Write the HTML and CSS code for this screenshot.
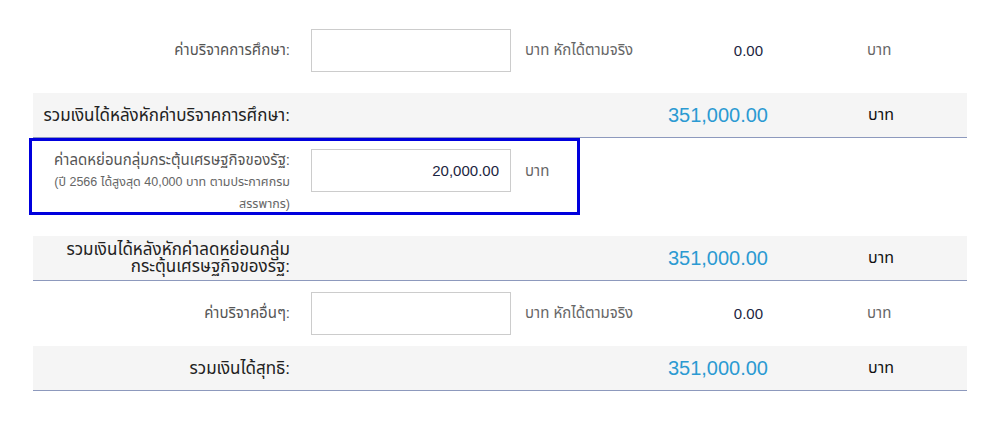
FILE: index.html
```html
<!DOCTYPE html>
<html lang="th">
<head>
  <meta charset="utf-8">
  <title>คำนวณเงินได้สุทธิ</title>
  <link rel="stylesheet" href="styles.css">
</head>
<body>
  <div class="form">

    <div class="row input-row">
      <div class="label">ค่าบริจาคการศึกษา:</div>
      <input type="text" class="amount-input" aria-label="ค่าบริจาคการศึกษา">
      <div class="unit">บาท หักได้ตามจริง</div>
      <div class="amount">0.00</div>
      <div class="currency">บาท</div>
    </div>

    <div class="row total-row first-total">
      <div class="label one-line">รวมเงินได้หลังหักค่าบริจาคการศึกษา:</div>
      <div></div>
      <div></div>
      <div class="total">351,000.00</div>
      <div class="currency">บาท</div>
    </div>

    <div class="row input-row note-row">
      <div class="highlight"></div>
      <div class="label">
        <div class="main-label">ค่าลดหย่อนกลุ่มกระตุ้นเศรษฐกิจของรัฐ:</div>
        <div class="note">(ปี 2566 ได้สูงสุด 40,000 บาท ตามประกาศกรม<br>สรรพากร)</div>
      </div>
      <input type="text" class="amount-input" value="20,000.00" aria-label="ค่าลดหย่อนกลุ่มกระตุ้นเศรษฐกิจของรัฐ">
      <div class="unit">บาท</div>
    </div>

    <div class="row total-row">
      <div class="label">รวมเงินได้หลังหักค่าลดหย่อนกลุ่ม<br>กระตุ้นเศรษฐกิจของรัฐ:</div>
      <div></div>
      <div></div>
      <div class="total">351,000.00</div>
      <div class="currency">บาท</div>
    </div>

    <div class="row input-row">
      <div class="label">ค่าบริจาคอื่นๆ:</div>
      <input type="text" class="amount-input" aria-label="ค่าบริจาคอื่นๆ">
      <div class="unit">บาท หักได้ตามจริง</div>
      <div class="amount">0.00</div>
      <div class="currency">บาท</div>
    </div>

    <div class="row total-row">
      <div class="label">รวมเงินได้สุทธิ:</div>
      <div></div>
      <div></div>
      <div class="total">351,000.00</div>
      <div class="currency">บาท</div>
    </div>

  </div>
</body>
</html>
```

FILE: styles.css
```css
body {
  margin: 0;
  background-color: white;
  font-family: "Liberation Sans", "Noto Sans Thai", Arial, sans-serif;
  font-size: 15px;
  color: #555;
}
.form {
  width: 934px;
  margin: 18px 0 0 33px;
}
.row {
  display: grid;
  grid-template-columns: 278px 200px 129px 130px 1fr;
  align-items: center;
}
.label {
  text-align: right;
  padding-right: 21px;
}
.input-row {
  padding: 11px 0;
}
.amount-input {
  box-sizing: border-box;
  width: 200px;
  height: 43px;
  padding: 0 11px;
  border: 1px solid #ccc;
  font-family: inherit;
  font-size: 15px;
  color: #1c2541;
  text-align: right;
}
.unit {
  padding-left: 14px;
  color: #666;
}
.amount {
  text-align: right;
  padding-right: 7px;
  font-size: 15px;
  color: #1c2541;
}
.currency {
  padding-left: 97px;
  color: #666;
}
.total-row {
  box-sizing: border-box;
  min-height: 45px;
  background-color: #f5f5f5;
  border-bottom: 1px solid #8d99bd;
}
.first-total {
  margin-top: 10px;
}
.total-row .label {
  font-size: 17px;
  line-height: 17px;
  color: #222;
}
.one-line {
  white-space: nowrap;
}
.total {
  text-align: right;
  padding-right: 2px;
  font-size: 20px;
  color: #2b9ad2;
}
.total-row .currency {
  padding-left: 98px;
  font-size: 16px;
  color: #111;
}
.note-row {
  position: relative;
  align-items: start;
  padding-bottom: 21px;
}
.note-row .unit {
  line-height: 43px;
}
.main-label {
  line-height: 22px;
}
.note {
  font-size: 12.5px;
  line-height: 22px;
  color: #666;
}
.highlight {
  position: absolute;
  left: -4px;
  top: 0;
  width: 545px;
  height: 71px;
  border: 3px solid #0000dd;
}
```
